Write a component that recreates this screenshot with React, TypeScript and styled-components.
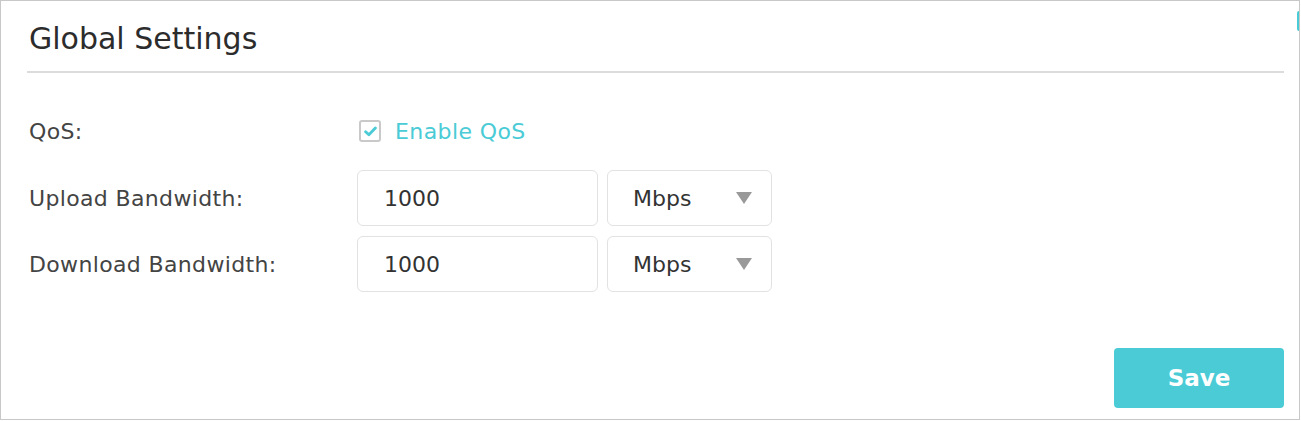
import React from "react";
import styled, { createGlobalStyle } from "styled-components";

const GlobalStyle = createGlobalStyle`
  html, body {
    margin: 0;
    padding: 0;
    background: #fff;
  }
  body {
    font-family: "DejaVu Sans", Verdana, sans-serif;
    color: #333;
  }
`;

const App = () => {
  return (
    <>
      <GlobalStyle />
      <Frame>
        <Panel>
          <Title>Global Settings</Title>
          <Form>
            <CheckRow>
              <Label>QoS:</Label>
              <CheckLabel>
                <CheckBox>
                  <svg width="13" height="11" viewBox="0 0 12 10">
                    <path
                      d="M1.5 5.2 L4.5 8 L10.5 1.8"
                      fill="none"
                      stroke="#4acbd6"
                      strokeWidth="2.6"
                      strokeLinecap="round"
                      strokeLinejoin="round"
                    />
                  </svg>
                </CheckBox>
                Enable QoS
              </CheckLabel>
            </CheckRow>
            <Row>
              <Label>Upload Bandwidth:</Label>
              <TextBox>1000</TextBox>
              <Select>
                Mbps
                <Arrow />
              </Select>
            </Row>
            <Row>
              <Label>Download Bandwidth:</Label>
              <TextBox>1000</TextBox>
              <Select>
                Mbps
                <Arrow />
              </Select>
            </Row>
          </Form>
          <Footer>
            <SaveButton>Save</SaveButton>
          </Footer>
        </Panel>
        <ScrollHint />
      </Frame>
    </>
  );
};

export default App;

const Frame = styled.div`
  position: relative;
  box-sizing: border-box;
  width: 1300px;
  height: 420px;
  border: 1px solid #c8c8c8;
  background: #fff;
  overflow: hidden;
`;

const Panel = styled.div`
  display: flex;
  flex-direction: column;
  padding: 0 15px 0 26px;
  height: 100%;
  box-sizing: border-box;
`;

const Title = styled.div`
  height: 72px;
  box-sizing: border-box;
  padding: 20px 0 0 2px;
  font-size: 30px;
  color: #2c2c2c;
  border-bottom: 2px solid #dcdcdc;
`;

const Form = styled.div`
  display: flex;
  flex-direction: column;
  gap: 10px;
  padding-top: 38px;
`;

const Row = styled.div`
  display: flex;
  align-items: center;
  height: 56px;
`;

const CheckRow = styled(Row)`
  height: 40px;
  margin-bottom: 9px;
`;

const Label = styled.div`
  width: 330px;
  padding-left: 2px;
  box-sizing: border-box;
  font-size: 22px;
  letter-spacing: 0.35px;
  color: #444;
`;

const CheckLabel = styled.div`
  display: flex;
  align-items: center;
  gap: 14px;
  padding-left: 2px;
  font-size: 22px;
  letter-spacing: 0.4px;
  color: #4acbd6;
`;

const CheckBox = styled.span`
  display: flex;
  align-items: center;
  justify-content: center;
  width: 22px;
  height: 22px;
  box-sizing: border-box;
  border: 2px solid #c9c9c9;
  border-radius: 3px;
`;

const TextBox = styled.div`
  display: flex;
  align-items: center;
  width: 241px;
  height: 100%;
  box-sizing: border-box;
  padding-left: 26px;
  border: 1px solid #e2e2e2;
  border-radius: 6px;
  font-size: 22px;
  color: #333;
`;

const Select = styled.div`
  display: flex;
  align-items: center;
  justify-content: space-between;
  width: 165px;
  height: 100%;
  margin-left: 9px;
  box-sizing: border-box;
  padding: 0 19px 0 25px;
  border: 1px solid #e2e2e2;
  border-radius: 6px;
  font-size: 22px;
  color: #333;
`;

const Arrow = styled.span`
  width: 0;
  height: 0;
  border-left: 8px solid transparent;
  border-right: 8px solid transparent;
  border-top: 12px solid #999;
`;

const Footer = styled.div`
  display: flex;
  justify-content: flex-end;
  margin-top: auto;
  padding-bottom: 11px;
`;

const SaveButton = styled.button`
  width: 170px;
  height: 60px;
  border: none;
  border-radius: 4px;
  background: #4acbd6;
  color: #fff;
  font-family: "DejaVu Sans", Verdana, sans-serif;
  font-size: 23px;
  font-weight: bold;
`;

const ScrollHint = styled.div`
  position: absolute;
  top: 10px;
  right: -2px;
  width: 4px;
  height: 20px;
  border-radius: 2px;
  background: #4acbd6;
`;
